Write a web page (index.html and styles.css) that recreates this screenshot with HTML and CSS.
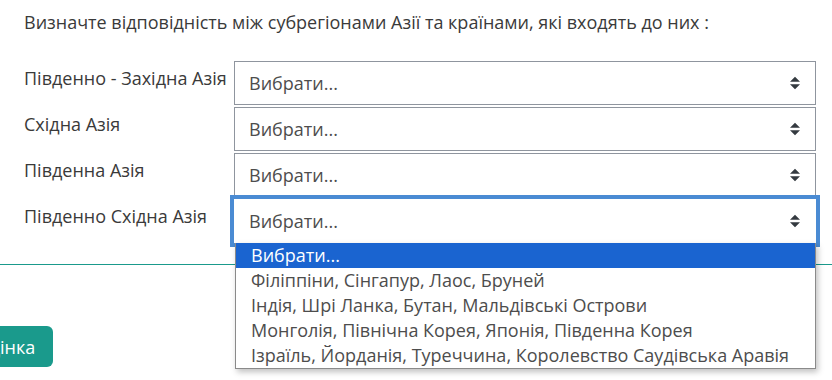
FILE: index.html
```html
<!DOCTYPE html>
<html lang="uk">
<head>
  <meta charset="UTF-8" />
  <meta name="viewport" content="width=device-width, initial-scale=1.0" />
  <title>Питання</title>
  <link rel="stylesheet" href="styles.css">
</head>
<body>
  <div class="question">
    <p class="question__text">Визначте відповідність між субрегіонами Азії та країнами, які входять до них :</p>
    <div class="match">
      <div class="match__row">
        <span class="match__label">Південно - Західна Азія</span>
        <div class="select">Вибрати...</div>
      </div>
      <div class="match__row">
        <span class="match__label">Східна Азія</span>
        <div class="select">Вибрати...</div>
      </div>
      <div class="match__row">
        <span class="match__label">Південна Азія</span>
        <div class="select">Вибрати...</div>
      </div>
      <div class="match__row">
        <span class="match__label">Південно Східна Азія</span>
        <div class="select select--open">
          Вибрати...
          <ul class="select__menu">
            <li class="select__option select__option--active">Вибрати...</li>
            <li class="select__option">Філіппіни, Сінгапур, Лаос, Бруней</li>
            <li class="select__option">Індія, Шрі Ланка, Бутан, Мальдівські Острови</li>
            <li class="select__option">Монголія, Північна Корея, Японія, Південна Корея</li>
            <li class="select__option">Ізраїль, Йорданія, Туреччина, Королевство Саудівська Аравія</li>
          </ul>
        </div>
      </div>
    </div>
  </div>
  <div class="actions">
    <button class="button">Оцінка</button>
  </div>
</body>
</html>
```

FILE: styles.css
```css
:root {
  --text-color: #3a3a3a;
  --select-text: #4d4d4d;
  --select-border: #8f959e;
  --focus: #4a8bd3;
  --active: #1a64d0;
  --teal: #1a9a8c;
}
* {
  box-sizing: border-box;
  margin: 0;
  padding: 0;
}
body {
  font-family: 'Open Sans', sans-serif;
  color: var(--text-color);
  background: #fff;
  overflow: hidden;
  height: 380px;
}
.question {
  padding: 9px 16px 0 24px;
  border-bottom: 1px solid var(--teal);
  padding-bottom: 19px;
}
.question__text {
  font-size: 18px;
  line-height: 26px;
  margin-bottom: 26px;
}
.match__row {
  display: flex;
  align-items: flex-start;
  margin-bottom: 2px;
}
.match__label {
  width: 210px;
  font-size: 18px;
  line-height: 24px;
  padding-top: 5px;
  white-space: nowrap;
}
.select {
  position: relative;
  width: 582px;
  height: 44px;
  border: 1px solid var(--select-border);
  padding: 0 40px 0 14px;
  font-size: 18px;
  line-height: 42px;
  color: var(--select-text);
  background: #fff url("data:image/svg+xml,%3csvg xmlns='http://www.w3.org/2000/svg' viewBox='0 0 4 5'%3e%3cpath fill='%23343a40' d='M2 0L0 2h4zm0 5L0 3h4z'/%3e%3c/svg%3e") no-repeat right 15px center;
  background-size: 10px 14px;
}
.select--open {
  box-shadow: 0 0 0 4px var(--focus);
  border-color: #fff;
}
.select__menu {
  position: absolute;
  top: 43px;
  left: 0;
  width: 581px;
  list-style: none;
  background: #fff;
  border: 1px solid #8a8a8a;
  border-top: none;
  box-shadow: 2px 3px 6px rgba(0, 0, 0, 0.25);
  z-index: 2;
}
.select__option {
  font-size: 18px;
  line-height: 25px;
  padding-left: 15px;
  color: var(--select-text);
  white-space: nowrap;
}
.select__option--active {
  background: var(--active);
  color: #fff;
}
.actions {
  padding-top: 61px;
}
.button {
  margin-left: -43px;
  width: 96px;
  height: 41px;
  border: none;
  border-radius: 6px;
  background: var(--teal);
  color: #fff;
  font-family: 'Open Sans', sans-serif;
  font-size: 18px;
  text-align: center;
}
```
